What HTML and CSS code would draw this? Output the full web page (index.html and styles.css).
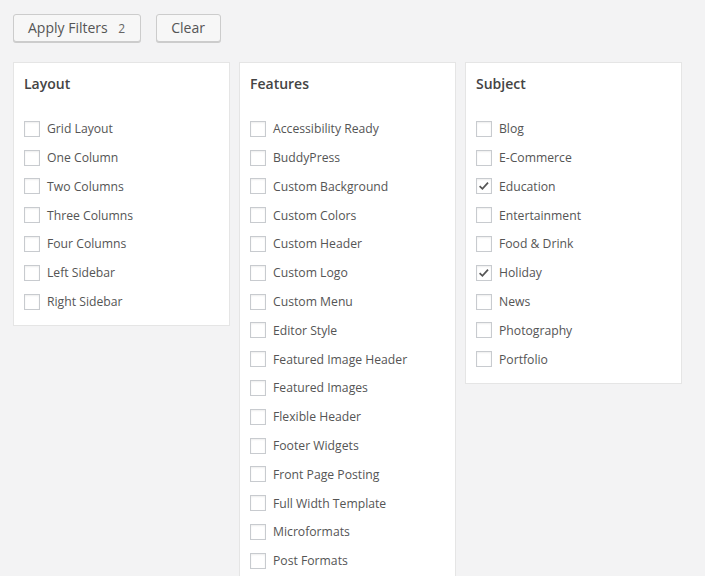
FILE: index.html
```html
<!DOCTYPE html>
<html>
<head>
<meta charset="utf-8">
<link rel="stylesheet" href="styles.css">
</head>
<body>
<div class="page">
  <div class="toolbar">
    <button class="btn">Apply Filters <span class="count">2</span></button>
    <button class="btn">Clear</button>
  </div>
  <div class="groups">
    <div class="group">
      <h4 class="title">Layout</h4>
      <label class="item"><span class="box"></span>Grid Layout</label>
      <label class="item"><span class="box"></span>One Column</label>
      <label class="item"><span class="box"></span>Two Columns</label>
      <label class="item"><span class="box"></span>Three Columns</label>
      <label class="item"><span class="box"></span>Four Columns</label>
      <label class="item"><span class="box"></span>Left Sidebar</label>
      <label class="item"><span class="box"></span>Right Sidebar</label>
    </div>
    <div class="group">
      <h4 class="title">Features</h4>
      <label class="item"><span class="box"></span>Accessibility Ready</label>
      <label class="item"><span class="box"></span>BuddyPress</label>
      <label class="item"><span class="box"></span>Custom Background</label>
      <label class="item"><span class="box"></span>Custom Colors</label>
      <label class="item"><span class="box"></span>Custom Header</label>
      <label class="item"><span class="box"></span>Custom Logo</label>
      <label class="item"><span class="box"></span>Custom Menu</label>
      <label class="item"><span class="box"></span>Editor Style</label>
      <label class="item"><span class="box"></span>Featured Image Header</label>
      <label class="item"><span class="box"></span>Featured Images</label>
      <label class="item"><span class="box"></span>Flexible Header</label>
      <label class="item"><span class="box"></span>Footer Widgets</label>
      <label class="item"><span class="box"></span>Front Page Posting</label>
      <label class="item"><span class="box"></span>Full Width Template</label>
      <label class="item"><span class="box"></span>Microformats</label>
      <label class="item"><span class="box"></span>Post Formats</label>
    </div>
    <div class="group">
      <h4 class="title">Subject</h4>
      <label class="item"><span class="box"></span>Blog</label>
      <label class="item"><span class="box"></span>E-Commerce</label>
      <label class="item"><span class="box checked"><svg viewBox="0 0 16 16" width="14" height="14"><path d="M3 8.2 L6.2 11.2 L12.6 4.2" fill="none" stroke="#555" stroke-width="2"/></svg></span>Education</label>
      <label class="item"><span class="box"></span>Entertainment</label>
      <label class="item"><span class="box"></span>Food &amp; Drink</label>
      <label class="item"><span class="box checked"><svg viewBox="0 0 16 16" width="14" height="14"><path d="M3 8.2 L6.2 11.2 L12.6 4.2" fill="none" stroke="#555" stroke-width="2"/></svg></span>Holiday</label>
      <label class="item"><span class="box"></span>News</label>
      <label class="item"><span class="box"></span>Photography</label>
      <label class="item"><span class="box"></span>Portfolio</label>
    </div>
  </div>
</div>
</body>
</html>
```
FILE: styles.css
```css
html, body {
  margin: 0;
  padding: 0;
  background: #f3f3f4;
  font-family: "Open Sans", "Liberation Sans", sans-serif;
  color: #555;
  overflow: hidden;
}
.page {
  padding: 14px 13px 0;
}
.toolbar {
  display: flex;
  gap: 15px;
  height: 28px;
}
.btn {
  box-sizing: border-box;
  height: 28px;
  padding: 0 15px 1px 14px;
  font-family: "Open Sans", "Liberation Sans", sans-serif;
  font-size: 14px;
  color: #555;
  background: #f7f7f7;
  border: 1px solid #cccccc;
  border-radius: 3px;
  box-shadow: 0 1px 0 #cccccc;
  line-height: 26px;
}
.count {
  font-size: 12px;
  color: #666;
  margin-left: 7px;
}
.groups {
  display: flex;
  align-items: flex-start;
  gap: 9px;
  margin-top: 20px;
}
.group {
  box-sizing: border-box;
  width: 217px;
  background: #fff;
  border: 1px solid #e5e5e5;
  padding: 11px 10px 9.5px;
}
.title {
  margin: 0 0 20.4px;
  font-size: 14px;
  font-weight: 600;
  line-height: 20px;
  color: #444;
}
.item {
  display: flex;
  align-items: center;
  height: 28.8px;
  font-size: 12.2px;
  color: #555;
}
.box {
  box-sizing: border-box;
  flex: none;
  width: 16px;
  height: 16px;
  border: 1px solid #c8cbcf;
  background: #fff;
  box-shadow: inset 0 1px 2px rgba(0,0,0,0.07);
  margin-right: 7px;
  display: flex;
  align-items: center;
  justify-content: center;
}
```
